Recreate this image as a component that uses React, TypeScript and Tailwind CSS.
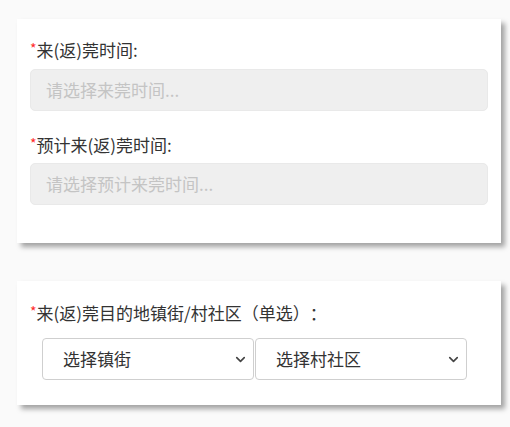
import { ChevronDown } from 'lucide-react';

const font = '[font-family:"Microsoft_YaHei","Noto_Sans_CJK_SC",sans-serif] [text-spacing-trim:space-all]';

function Label({ text }: { text: string }) {
  return (
    <div className="flex items-start text-[17px] leading-[20px] text-[#333]">
      <span className="text-[#ff2a2a] text-[14px] leading-[14px] mt-[1px]">*</span>
      <span>{text}</span>
    </div>
  );
}

function FakeInput({ placeholder }: { placeholder: string }) {
  return (
    <div className="h-[42px] rounded-[5px] bg-[#efefef] border border-[#e9e9e9] flex items-center pl-[15px] text-[17px] text-[#c4c4c4]">
      {placeholder}
    </div>
  );
}

function FakeSelect({ text }: { text: string }) {
  return (
    <div className="w-[212px] h-[42px] rounded-[4px] border border-[#cfcfcf] bg-white flex items-center justify-between pl-[20px] pr-[5px] text-[17px] text-[#333]">
      <span>{text}</span>
      <ChevronDown className="h-[15px] w-[15px] text-[#444]" strokeWidth={2.6} />
    </div>
  );
}

export default function App() {
  return (
    <div className={`min-h-[427px] bg-[#fafafa] pl-[17px] pt-[19px] ${font}`}>
      <div className="w-[484px] bg-white shadow-[4px_4px_5px_rgba(0,0,0,0.35)] px-[13px] pt-[21px] pb-[38px]">
        <Label text="来(返)莞时间:" />
        <div className="mt-[9px]">
          <FakeInput placeholder="请选择来莞时间..." />
        </div>
        <div className="mt-[24px]">
          <Label text="预计来(返)莞时间:" />
        </div>
        <div className="mt-[8px]">
          <FakeInput placeholder="请选择预计来莞时间..." />
        </div>
      </div>

      <div className="mt-[38px] w-[484px] bg-white shadow-[4px_4px_5px_rgba(0,0,0,0.35)] px-[13px] pt-[22px] pb-[25px]">
        <Label text="来(返)莞目的地镇街/村社区（单选）：" />
        <div className="mt-[15px] ml-[12px] flex gap-[1px]">
          <FakeSelect text="选择镇街" />
          <FakeSelect text="选择村社区" />
        </div>
      </div>
    </div>
  );
}
